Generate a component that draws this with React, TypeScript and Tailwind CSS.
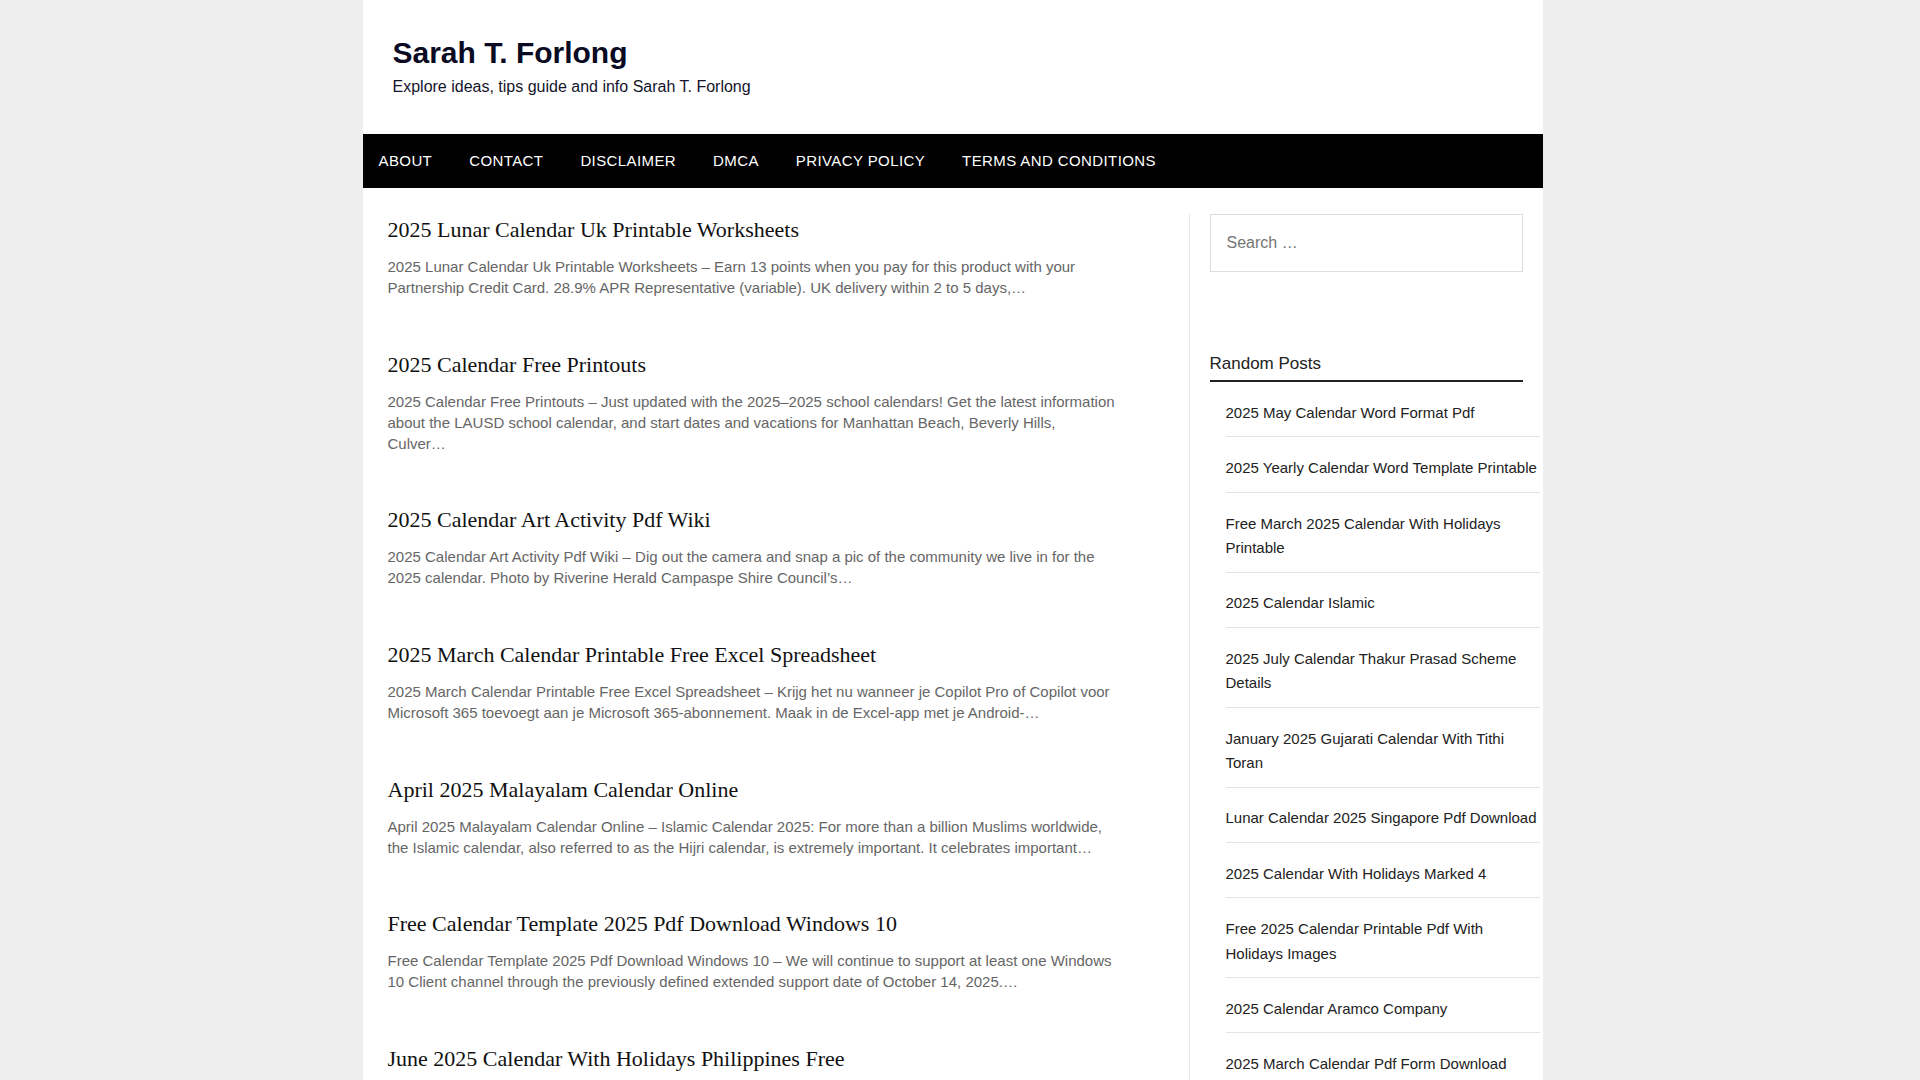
import React from "react";

const posts = [
  {
    title: "2025 Lunar Calendar Uk Printable Worksheets",
    excerpt:
      "2025 Lunar Calendar Uk Printable Worksheets – Earn 13 points when you pay for this product with your Partnership Credit Card. 28.9% APR Representative (variable). UK delivery within 2 to 5 days,…",
  },
  {
    title: "2025 Calendar Free Printouts",
    excerpt:
      "2025 Calendar Free Printouts – Just updated with the 2025–2025 school calendars! Get the latest information about the LAUSD school calendar, and start dates and vacations for Manhattan Beach, Beverly Hills, Culver…",
  },
  {
    title: "2025 Calendar Art Activity Pdf Wiki",
    excerpt:
      "2025 Calendar Art Activity Pdf Wiki – Dig out the camera and snap a pic of the community we live in for the 2025 calendar. Photo by Riverine Herald Campaspe Shire Council’s…",
  },
  {
    title: "2025 March Calendar Printable Free Excel Spreadsheet",
    excerpt:
      "2025 March Calendar Printable Free Excel Spreadsheet – Krijg het nu wanneer je Copilot Pro of Copilot voor Microsoft 365 toevoegt aan je Microsoft 365-abonnement. Maak in de Excel-app met je Android-…",
  },
  {
    title: "April 2025 Malayalam Calendar Online",
    excerpt:
      "April 2025 Malayalam Calendar Online – Islamic Calendar 2025: For more than a billion Muslims worldwide, the Islamic calendar, also referred to as the Hijri calendar, is extremely important. It celebrates important…",
  },
  {
    title: "Free Calendar Template 2025 Pdf Download Windows 10",
    excerpt:
      "Free Calendar Template 2025 Pdf Download Windows 10 – We will continue to support at least one Windows 10 Client channel through the previously defined extended support date of October 14, 2025.…",
  },
  {
    title: "June 2025 Calendar With Holidays Philippines Free",
    excerpt:
      "June 2025 Calendar With Holidays Philippines Free – Plan your month ahead with the complete list of regular holidays and special non-working days in the Philippines for June 2025,…",
  },
  {
    title: "2025 Printable Calendar Monthly Free Download",
    excerpt:
      "2025 Printable Calendar Monthly Free Download – Download and print free monthly calendars for 2025 with holidays, available in PDF, Word and Excel formats for home, school or office use,…",
  },
];

const randomPosts = [
  "2025 May Calendar Word Format Pdf",
  "2025 Yearly Calendar Word Template Printable",
  "Free March 2025 Calendar With Holidays Printable",
  "2025 Calendar Islamic",
  "2025 July Calendar Thakur Prasad Scheme Details",
  "January 2025 Gujarati Calendar With Tithi Toran",
  "Lunar Calendar 2025 Singapore Pdf Download",
  "2025 Calendar With Holidays Marked 4",
  "Free 2025 Calendar Printable Pdf With Holidays Images",
  "2025 Calendar Aramco Company",
  "2025 March Calendar Pdf Form Download",
  "2025 Weekly Calendar Printable Free",
];

const nav = ["About", "Contact", "Disclaimer", "DMCA", "Privacy Policy", "Terms and Conditions"];

export default function App() {
  return (
    <div
      className="min-h-screen bg-[#eeeeee] pr-[15px]"
      style={{ fontFamily: '"Liberation Sans", Arial, sans-serif' }}
    >
      <div className="mx-auto w-[1180px] bg-white">
        <header className="pt-[35px] pb-[35px] pl-[30px]">
          <h1 className="text-[30px] leading-[36px] font-bold text-[#0a0a23]">
            Sarah T. Forlong
          </h1>
          <p className="mt-[4px] text-[16px] leading-[24px] text-[#14142b]">
            Explore ideas, tips guide and info Sarah T. Forlong
          </p>
        </header>

        <nav className="flex h-[54px] items-center bg-black">
          {nav.map((n) => (
            <a
              key={n}
              href="#"
              className="px-[18.5px] text-[15px] uppercase tracking-[0.4px] text-white first:pl-[16px]"
            >
              {n}
            </a>
          ))}
        </nav>

        <div className="mt-[26px] flex">
          <main className="w-[826px] shrink-0 pt-[2px] pl-[25px]">
            {posts.map((p) => (
              <article key={p.title} className="mb-[52.7px] w-[729px]">
                <h2
                  className="text-[22px] leading-[28px] text-[#111111]"
                  style={{ fontFamily: '"Liberation Serif", "Times New Roman", serif' }}
                >
                  {p.title}
                </h2>
                <p className="mt-[12px] text-[15px] leading-[21px] text-[#666666]">
                  {p.excerpt}
                </p>
              </article>
            ))}
          </main>

          <aside className="flex-1 border-l border-[#e8e8e8] pl-[20px] pb-[40px]">
            <div className="flex h-[58px] w-[313px] items-center border border-[#dddddd] pl-[16px]">
              <input
                type="text"
                placeholder="Search …"
                className="w-full bg-transparent text-[16px] text-[#333] outline-none placeholder:text-[#757575]"
                style={{ fontFamily: '"Liberation Sans", Arial, sans-serif' }}
              />
            </div>

            <div className="mt-[80px] w-[313px]">
              <h3 className="border-b-2 border-[#222222] pb-[4px] text-[17px] leading-[24px] text-[#222222]">
                Random Posts
              </h3>
            </div>
            <ul className="ml-[16px] w-[314px]">
              {randomPosts.map((r) => (
                <li
                  key={r}
                  className="border-b border-[#e5e5e5] pt-[18.85px] pb-[11px] text-[15px] leading-[24.5px] text-[#222222]"
                >
                  <a href="#">{r}</a>
                </li>
              ))}
            </ul>
          </aside>
        </div>
      </div>
    </div>
  );
}
